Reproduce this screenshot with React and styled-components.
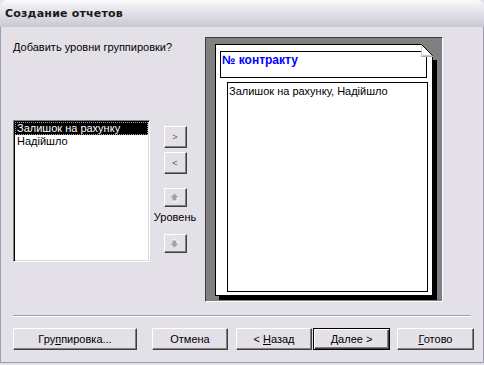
import styled, { createGlobalStyle, css } from "styled-components";

const GlobalStyle = createGlobalStyle`
  body {
    margin: 0;
    background: #e4e0e8;
    font-family: "Liberation Sans", Arial, sans-serif;
    font-size: 11px;
    color: #000;
  }
`;

const Window = styled.div`
  width: 484px;
  height: 363px;
  display: flex;
  flex-direction: column;
  box-sizing: border-box;
`;

const TitleBar = styled.div`
  height: 27px;
  flex-shrink: 0;
  display: flex;
  align-items: center;
  padding-left: 5px;
  border-radius: 7px 7px 0 0;
  background: linear-gradient(
    #fbfbfd 0%,
    #ecebf1 25%,
    #dcdae4 60%,
    #c9c7d5 100%
  );
  font-family: "DejaVu Sans", Verdana, sans-serif;
  font-weight: bold;
  font-size: 11px;
  letter-spacing: 0.2px;
  color: #1a1a1a;
`;

const Body = styled.div`
  flex: 1;
  display: flex;
  flex-direction: column;
  padding: 10px 0 0 12px;
  border: 1px solid #9d9bad;
  border-top: none;
  background: #e4e0e8;
`;

const MainRow = styled.div`
  display: flex;
  height: 265px;
`;

const LeftPane = styled.div`
  width: 192px;
  display: flex;
  flex-direction: column;
`;

const Prompt = styled.div`
  margin-top: 4px;
  line-height: 13px;
`;

const ListRow = styled.div`
  margin-top: 66px;
  display: flex;
  gap: 2px;
  align-items: flex-start;
`;

const sunken = css`
  border: 1px solid;
  border-color: #808080 #fff #fff #808080;
  box-shadow: inset 1px 1px 0 #000, inset -1px -1px 0 #dcd8e0;
`;

const ListBox = styled.div`
  ${sunken};
  width: 137px;
  height: 142px;
  box-sizing: border-box;
  padding: 1px;
  background: #fff;
`;

const ListItem = styled.div`
  position: relative;
  height: 13px;
  line-height: 13px;
  padding-left: 2px;
  white-space: nowrap;
  background: ${({ $selected }) => ($selected ? "#000" : "transparent")};
  color: ${({ $selected }) => ($selected ? "#fff" : "#000")};
  outline: ${({ $selected }) => ($selected ? "1px dotted #9a9a9a" : "none")};
  outline-offset: -1px;
`;

const ButtonColumn = styled.div`
  width: 46px;
  display: flex;
  flex-direction: column;
  align-items: center;
  padding-top: 6px;
`;

const raised = css`
  box-sizing: border-box;
  border: 1px solid;
  border-color: #fff #404040 #404040 #fff;
  box-shadow: inset -1px -1px 0 #808080;
  background: #e4e0e8;
  font-family: "Liberation Sans", Arial, sans-serif;
  color: #000;
  padding: 0;
  display: flex;
  align-items: center;
  justify-content: center;
`;

const SmallButton = styled.button`
  ${raised};
  width: 23px;
  height: ${({ $short }) => ($short ? "19px" : "22px")};
  margin-top: ${({ $gap }) => $gap || 0}px;
  font-size: 9px;
  color: #5a5a5a;
`;

const LevelLabel = styled.div`
  margin-top: 4px;
  line-height: 13px;
`;

const PreviewFrame = styled.div`
  width: 238px;
  height: 265px;
  box-sizing: border-box;
  border: 1px solid;
  border-color: #404040 #fff #fff #404040;
  background: #808080;
  padding: 6px 0 0 9px;
`;

const Page = styled.div`
  position: relative;
  width: 218px;
  height: 252px;
  box-sizing: border-box;
  border: 1px solid #000;
  background: #fff;
  box-shadow: 4px 4px 0 #000;
  padding: 6px 0 0 4px;
`;

const Fold = styled.svg`
  position: absolute;
  top: -1px;
  right: -5px;
`;

const HeaderBox = styled.div`
  width: 207px;
  height: 27px;
  box-sizing: border-box;
  border: 1px solid #000;
  padding: 1px 0 0 1px;
  color: #0000ff;
  font-weight: bold;
  font-size: 12px;
  line-height: 14px;
`;

const DetailBox = styled.div`
  margin: 4px 0 0 7px;
  width: 201px;
  height: 210px;
  box-sizing: border-box;
  border: 1px solid #000;
  padding: 2px 0 0 1px;
  line-height: 13px;
`;

const Separator = styled.div`
  margin-top: 13px;
  width: 458px;
  border-top: 1px solid #a09eae;
  border-bottom: 1px solid #fff;
`;

const Footer = styled.div`
  margin-top: 11px;
  display: flex;
`;

const DialogButton = styled.button`
  ${raised};
  width: ${({ $w }) => $w}px;
  height: 22px;
  margin-left: ${({ $gap }) => $gap || 0}px;
  font-size: 11px;
  ${({ $default }) =>
    $default &&
    css`
      border-color: #000;
      box-shadow: inset 1px 1px 0 #fff, inset -1px -1px 0 #404040,
        inset -2px -2px 0 #808080;
    `}
`;

const Label = styled.span`
  white-space: pre;
`;

const Key = styled.span`
  text-decoration: underline;
`;

function Arrow({ down }) {
  const pts = "4,0 8,4 6,4 6,7 2,7 2,4 0,4";
  return (
    <svg
      width="10"
      height="9"
      viewBox="0 0 10 9"
      style={down ? { transform: "scaleY(-1)" } : undefined}
    >
      <polygon points={pts} transform="translate(1.5,1.5)" fill="#fff" />
      <polygon points={pts} transform="translate(0.5,0.5)" fill="#a3a1ab" />
    </svg>
  );
}

export default function App() {
  return (
    <>
      <GlobalStyle />
      <Window>
        <TitleBar>Создание отчетов</TitleBar>
        <Body>
          <MainRow>
            <LeftPane>
              <Prompt>Добавить уровни группировки?</Prompt>
              <ListRow>
                <ListBox>
                  <ListItem $selected>Залишок на рахунку</ListItem>
                  <ListItem>Надійшло</ListItem>
                </ListBox>
                <ButtonColumn>
                  <SmallButton>&gt;</SmallButton>
                  <SmallButton $gap={4}>&lt;</SmallButton>
                  <SmallButton $short $gap={14}>
                    <Arrow />
                  </SmallButton>
                  <LevelLabel>Уровень</LevelLabel>
                  <SmallButton $short $gap={10}>
                    <Arrow down />
                  </SmallButton>
                </ButtonColumn>
              </ListRow>
            </LeftPane>
            <PreviewFrame>
              <Page>
                <Fold width="16" height="16" viewBox="0 0 16 16">
                  <polygon points="0,0 16,0 16,16 12,16 12,12" fill="#808080" />
                  <polygon points="0,0 11,11 0,11" fill="#fff" />
                  <polyline
                    points="0.5,0 0.5,11.5 11.5,11.5"
                    fill="none"
                    stroke="#c8c8c8"
                  />
                  <line x1="0" y1="0.5" x2="0.5" y2="0.5" stroke="#000" />
                  <line x1="0.5" y1="0.5" x2="11.5" y2="11.5" stroke="#000" />
                  <rect x="0" y="12" width="12" height="1" fill="#b0b0b0" />
                </Fold>
                <HeaderBox>№ контракту</HeaderBox>
                <DetailBox>Залишок на рахунку, Надійшло</DetailBox>
              </Page>
            </PreviewFrame>
          </MainRow>
          <Separator />
          <Footer>
            <DialogButton $w={124}>
              <Label>
                Гру<Key>п</Key>пировка...
              </Label>
            </DialogButton>
            <DialogButton $w={76} $gap={15}>
              <Label>Отмена</Label>
            </DialogButton>
            <DialogButton $w={76} $gap={8}>
              <Label>
                {"< "}
                <Key>Н</Key>азад
              </Label>
            </DialogButton>
            <DialogButton $w={77} $gap={1} $default>
              <Label>
                <Key>Д</Key>
                {"алее >"}
              </Label>
            </DialogButton>
            <DialogButton $w={77} $gap={7}>
              <Label>
                <Key>Г</Key>отово
              </Label>
            </DialogButton>
          </Footer>
        </Body>
      </Window>
    </>
  );
}
